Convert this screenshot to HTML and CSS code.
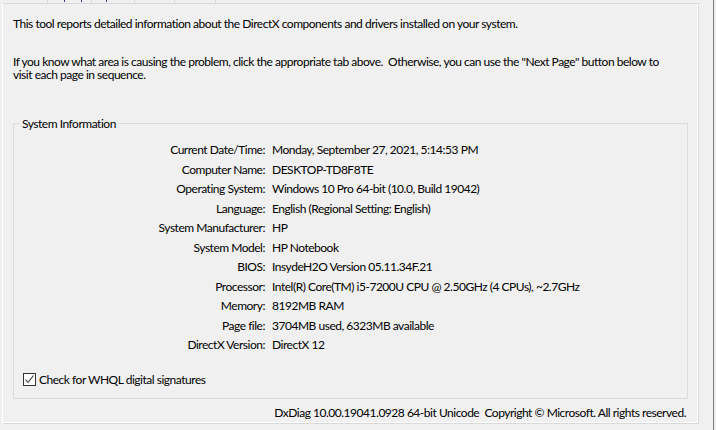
FILE: index.html
```html
<!DOCTYPE html>
<html>
<head>
<meta charset="utf-8">
<link rel="stylesheet" href="styles.css">
</head>
<body>
<div class="window">
  <div class="main">
    <div class="tabs">
      <div class="tab"><i class="mark m1"></i><i class="mark m2"></i></div>
      <div class="tab"><i class="mark m3"></i></div>
      <div class="tab"></div>
      <div class="tab"></div>
    </div>
    <div class="panel">
      <p class="intro first">This tool reports detailed information about the DirectX components and drivers installed on your system.</p>
      <p class="intro">If you know what area is causing the problem, click the appropriate tab above.&nbsp; Otherwise, you can use the "Next Page" button below to visit each page in sequence.</p>
      <fieldset class="group">
        <legend class="legend">System Information</legend>
        <div class="info">
          <div class="lbl">Current Date/Time:</div><div class="val">Monday, September 27, 2021, 5:14:53 PM</div>
          <div class="lbl">Computer Name:</div><div class="val">DESKTOP-TD8F8TE</div>
          <div class="lbl">Operating System:</div><div class="val">Windows 10 Pro 64-bit (10.0, Build 19042)</div>
          <div class="lbl">Language:</div><div class="val">English (Regional Setting: English)</div>
          <div class="lbl">System Manufacturer:</div><div class="val">HP</div>
          <div class="lbl">System Model:</div><div class="val">HP Notebook</div>
          <div class="lbl">BIOS:</div><div class="val">InsydeH2O Version 05.11.34F.21</div>
          <div class="lbl">Processor:</div><div class="val">Intel(R) Core(TM) i5-7200U CPU @ 2.50GHz (4 CPUs), ~2.7GHz</div>
          <div class="lbl">Memory:</div><div class="val">8192MB RAM</div>
          <div class="lbl">Page file:</div><div class="val">3704MB used, 6323MB available</div>
          <div class="lbl">DirectX Version:</div><div class="val">DirectX 12</div>
        </div>
        <label class="check">
          <span class="box"><svg width="11" height="11" viewBox="0 0 11 11"><path d="M1.5 5.5 L4 8.5 L9.5 1.5" fill="none" stroke="#333" stroke-width="1.1"/></svg></span>
          <span class="check-text">Check for WHQL digital signatures</span>
        </label>
      </fieldset>
      <div class="footer">DxDiag 10.00.19041.0928 64-bit Unicode&nbsp; Copyright © Microsoft. All rights reserved.</div>
    </div>
  </div>
  <div class="edge"></div>
</div>
</body>
</html>
```
FILE: styles.css
```css
html, body {
  margin: 0;
  padding: 0;
  background: #f0f0f0;
}
body {
  width: 716px;
  height: 430px;
  overflow: hidden;
  font-family: "Lato", "Noto Sans", sans-serif;
  font-size: 12px;
  line-height: 13px;
  letter-spacing: -0.48px;
  color: #000;
}
.window {
  display: flex;
  height: 430px;
}
.main {
  width: 713px;
  display: flex;
  flex-direction: column;
}
.edge {
  width: 1px;
  background: #7a7a7a;
}
.tabs {
  display: flex;
  height: 3px;
  overflow: hidden;
  padding-left: 47px;
}
.tab {
  position: relative;
  height: 3px;
  border-left: 1px solid #d9d9d9;
}
.tab:nth-child(1) { width: 43px; }
.tab:nth-child(2) { width: 42px; }
.tab:nth-child(3) { width: 39px; }
.tab:nth-child(4) { width: 40px; border-right: 1px solid #d9d9d9; }
.mark {
  position: absolute;
  top: 0;
  width: 1px;
  height: 2px;
  background: #3a3a7a;
}
.m1 { left: 16px; }
.m2 { left: 33px; }
.m3 { left: 14px; }
.panel {
  margin-left: 2px;
  border: 1px solid #d9d9d9;
  border-left-color: #ffffff;
  box-shadow: inset -1px -1px 0 #ffffff;
  padding: 13px 12px 0 10px;
  box-sizing: border-box;
  height: 421px;
  width: 697px;
  display: flex;
  flex-direction: column;
}
.intro {
  margin: 0;
  max-width: 662px;
}
.intro.first {
  margin-bottom: 25px;
}
.group {
  margin: 36px 0 0 0;
  padding: 0 0 12px 0;
  border: 1px solid #dcdcdc;
  min-width: 0;
  width: 675px;
  box-sizing: border-box;
}
.legend {
  margin-left: 6px;
  padding: 0 2px;
  line-height: 13px;
}
.info {
  display: grid;
  grid-template-columns: 251px 1fr;
  column-gap: 7px;
  grid-auto-rows: 19.5px;
  align-items: center;
  margin-top: 10px;
}
.lbl {
  text-align: right;
  white-space: nowrap;
}
.val {
  white-space: nowrap;
}
.check {
  display: flex;
  align-items: center;
  margin: 18px 0 0 9px;
  height: 13px;
}
.box {
  width: 13px;
  height: 13px;
  box-sizing: border-box;
  border: 1px solid #333333;
  background: #ffffff;
  display: flex;
  align-items: center;
  justify-content: center;
}
.check-text {
  margin-left: 3px;
}
.footer {
  margin-top: 7px;
  text-align: right;
  white-space: nowrap;
}
```
